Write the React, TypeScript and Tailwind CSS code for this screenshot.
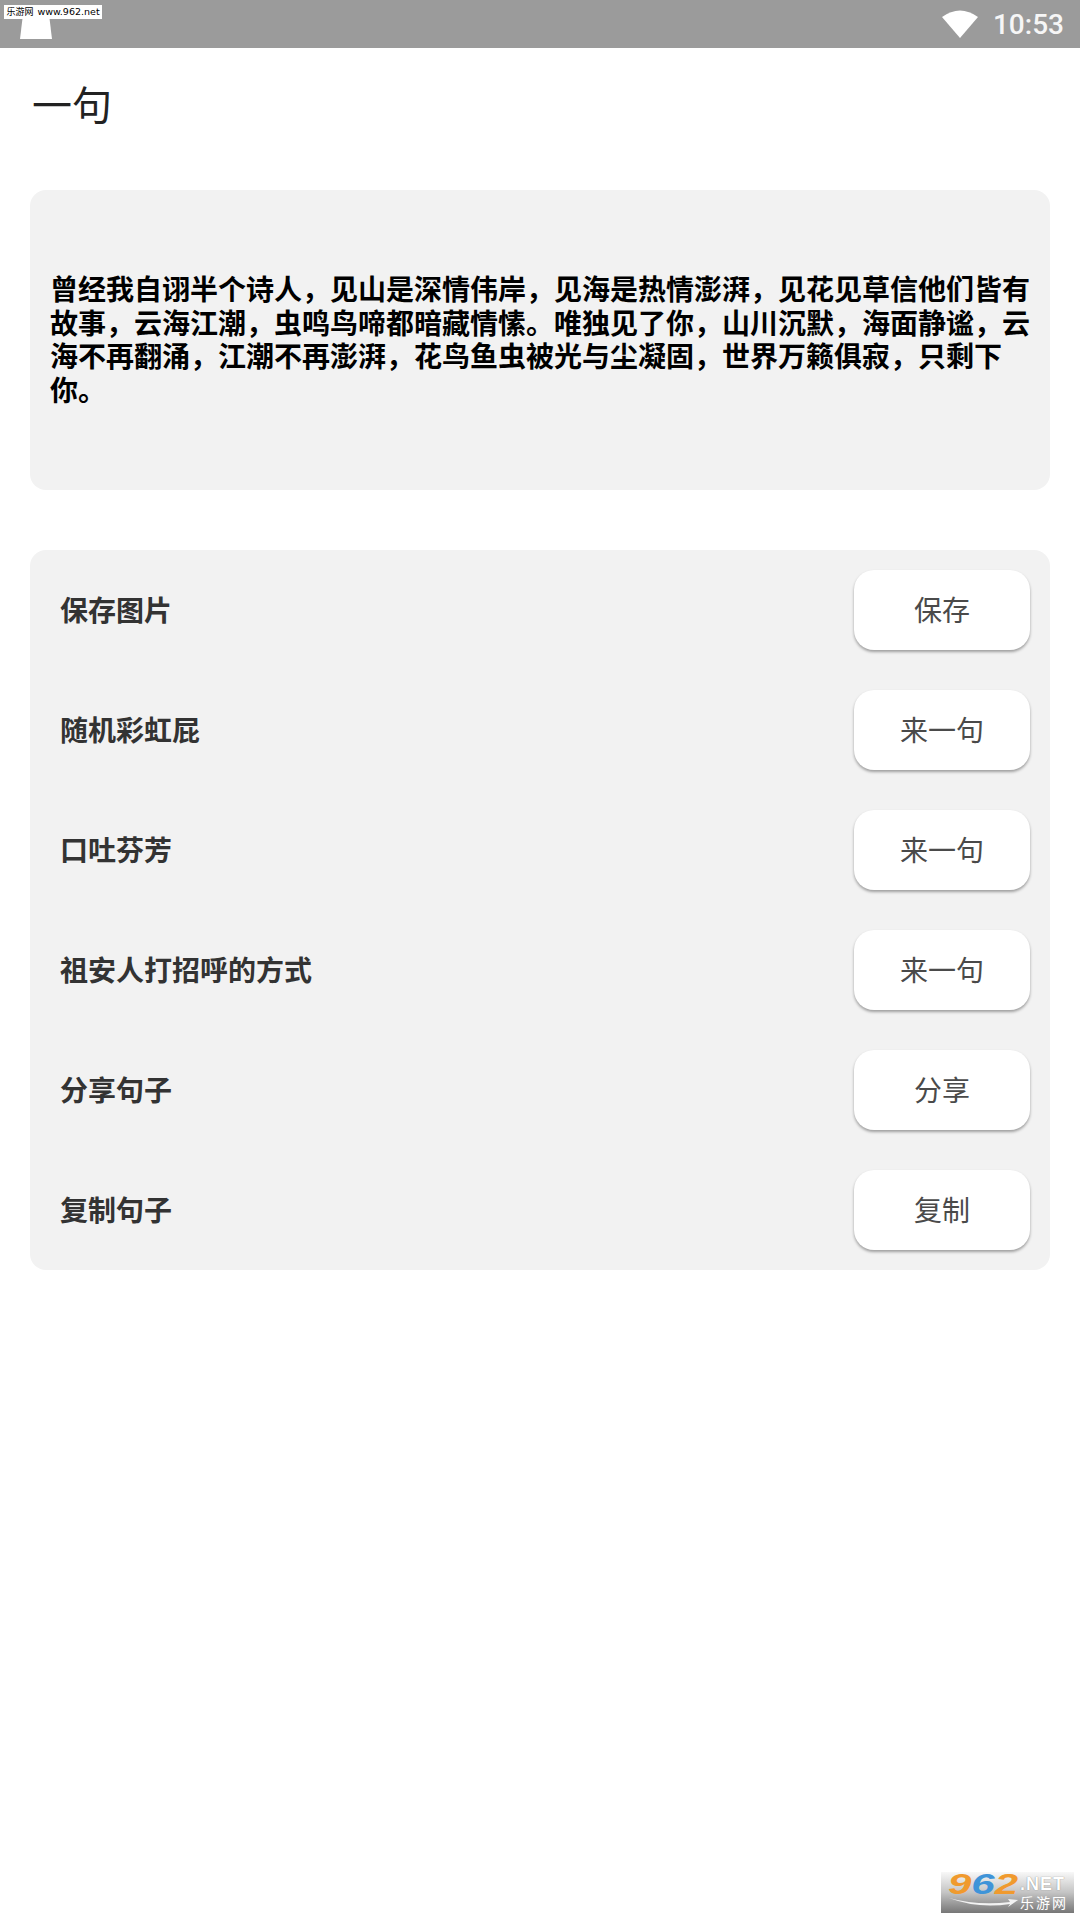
import React from 'react';

const rows = [
  { label: '保存图片', action: '保存' },
  { label: '随机彩虹屁', action: '来一句' },
  { label: '口吐芬芳', action: '来一句' },
  { label: '祖安人打招呼的方式', action: '来一句' },
  { label: '分享句子', action: '分享' },
  { label: '复制句子', action: '复制' },
];

const App: React.FC = () => {
  return (
    <div className="relative w-[1080px] h-[1920px] bg-white overflow-hidden font-['Roboto','Noto_Sans_CJK_SC',sans-serif]">
      {/* status bar */}
      <div className="h-[48px] bg-[#9b9b9b] flex items-center justify-end pr-[16px]">
        <svg width="36" height="28" viewBox="0 0 36 28" className="mr-[15px]">
          <path d="M0 7 Q18 -6 36 7 L18 28 Z" fill="#ffffff" />
        </svg>
        <span className="text-[28px] leading-none font-medium text-[#f6f6f6] mt-[2px]">10:53</span>
      </div>

      {/* watermark top-left */}
      <div className="absolute left-[20px] top-[18px] w-[32px] h-[21px] bg-white [clip-path:polygon(8%_0,92%_0,100%_100%,0_100%)]" />
      <div className="absolute left-[4px] top-[5px] w-[98px] h-[14px] bg-white flex items-center justify-center gap-[4px] text-black whitespace-nowrap">
        <span className="text-[9px] leading-none">乐游网</span>
        <span className="text-[9.5px] leading-none font-['DejaVu_Sans',sans-serif]">www.962.net</span>
      </div>

      <h1 className="pl-[32px] pt-[34px] text-[40px] leading-[50px] text-[#222222] font-normal">一句</h1>

      <div className="mx-[30px] mt-[58px] h-[300px] rounded-[16px] bg-[#f2f2f2] flex items-center px-[20px]">
        <p className="pt-[2px] text-[28px] leading-[33.5px] font-bold text-black">
          曾经我自诩半个诗人，见山是深情伟岸，见海是热情澎湃，见花见草信他们皆有故事，云海江潮，虫鸣鸟啼都暗藏情愫。唯独见了你，山川沉默，海面静谧，云海不再翻涌，江潮不再澎湃，花鸟鱼虫被光与尘凝固，世界万籁俱寂，只剩下你。
        </p>
      </div>

      <div className="mx-[30px] mt-[60px] rounded-[16px] bg-[#f2f2f2] py-[20px] pl-[30px] pr-[20px] flex flex-col gap-[40px]">
        {rows.map((row) => (
          <div key={row.label} className="flex items-center justify-between">
            <span className="pt-[4px] text-[28px] font-bold text-[#333333]">{row.label}</span>
            <button className="w-[176px] h-[80px] pt-[4px] rounded-[20px] bg-white text-[28px] text-[#4a4a4a] shadow-[0_2px_3px_rgba(0,0,0,0.35)]">
              {row.action}
            </button>
          </div>
        ))}
      </div>

      {/* watermark bottom-right */}
      <div className="absolute right-[6px] bottom-[7px] w-[133px] h-[41px] pl-[7px] pt-[1px] bg-gradient-to-b from-[#f8f8f8] via-[#c4c4c4] to-[#777777] flex items-start gap-[2px] font-['Liberation_Sans',sans-serif]">
        <div className="w-[70px] flex flex-col gap-[2px]">
          <span className="block origin-left scale-x-[1.4] text-[30px] leading-[22px] font-bold italic text-[#f09a2e]">
            9<span className="text-[#3f94d8]">6</span>2
          </span>
          <svg width="70" height="11" viewBox="0 0 70 11">
            <path d="M1 1 Q30 9 62 5 L60 2 L70 3 L60 10 L62 7 Q30 12 1 1 Z" fill="#f2f2f2" />
          </svg>
        </div>
        <div className="flex flex-col items-start pt-[3px]">
          <span className="text-[18px] leading-[16px] font-bold text-white tracking-[1px] [text-shadow:0_0_1px_#666]">.NET</span>
          <span className="text-[14px] leading-[20px] text-white tracking-[2px] font-['Noto_Sans_CJK_SC',sans-serif] whitespace-nowrap">乐游网</span>
        </div>
      </div>
    </div>
  );
};

export default App;
